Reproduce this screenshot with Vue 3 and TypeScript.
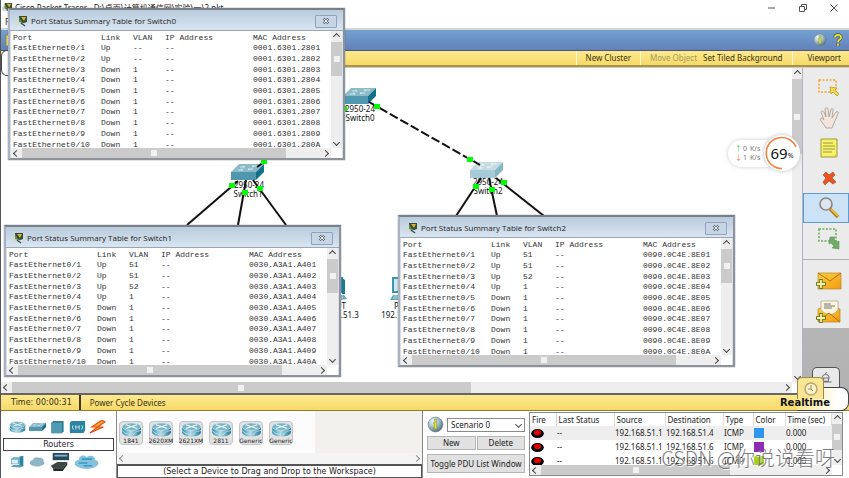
<script setup lang="ts">
import { ref } from 'vue'

interface PortRow { port: string; link: string; vlan: string; mac: string }
interface StatusWindow { id: string; title: string; rows: PortRow[] }
interface Pdu { source: string; destination: string; tone: string; id: number }

const suffixes = ['01', '02', '03', '04', '05', '06', '07', '08', '09', '0A']

function buildRows(prefix: string, vlans: string[], up: number): PortRow[] {
  return suffixes.map((s, i) => ({
    port: `FastEthernet0/${i + 1}`,
    link: i < up ? 'Up' : 'Down',
    vlan: vlans[i] ?? '1',
    mac: prefix + s,
  }))
}

const windows = ref<StatusWindow[]>([
  { id: 'w0', title: 'Port Status Summary Table for Switch0', rows: buildRows('0001.6301.28', ['--', '--'], 2) },
  { id: 'w1', title: 'Port Status Summary Table for Switch1', rows: buildRows('0030.A3A1.A4', ['51', '51', '52'], 4) },
  { id: 'w2', title: 'Port Status Summary Table for Switch2', rows: buildRows('0090.0C4E.8E', ['51', '51', '52'], 4) },
])

function closeWindow(id: string): void {
  windows.value = windows.value.filter((w) => w.id !== id)
}

const models: string[] = ['1841', '2620XM', '2621XM', '2811', 'Generic', 'Generic']
const scenario = ref('Scenario 0')

const pdus: Pdu[] = [
  { id: 1, source: '192.168.51.1', destination: '192.168.51.4', tone: 'blue' },
  { id: 2, source: '192.168.51.1', destination: '192.168.51.6', tone: 'purple' },
  { id: 3, source: '192.168.51.1', destination: '192.168.51.6', tone: 'lime' },
]

const links: string[] = [
  'M238 181 187 225', 'M246 180 238 225', 'M253 180 286 225',
  'M481 178 456 216', 'M489 178 497 216', 'M496 178 544 216',
  'M257 167 264 162',
]
const lights: [number, number][] = [
  [377, 107], [344, 109], [470, 160], [264, 162], [232, 186], [245, 193],
  [260, 189], [476, 187], [492, 190], [504, 183],
]
</script>

<template>
  <div class="app">
    <svg class="defs" aria-hidden="true">
      <defs>
        <linearGradient id="face" x1="0" y1="0" x2="1" y2="0">
          <stop offset="0" stop-color="#2f8fb0" /><stop offset=".45" stop-color="#b5dde8" /><stop offset="1" stop-color="#1f7898" />
        </linearGradient>
        <radialGradient id="orb" cx=".35" cy=".3" r=".8">
          <stop offset="0" stop-color="#f4fafd" /><stop offset=".5" stop-color="#9db9c6" /><stop offset="1" stop-color="#3f6278" />
        </radialGradient>
        <linearGradient id="mail" x1="0" y1="0" x2="1" y2="1">
          <stop offset="0" stop-color="#ffd23a" /><stop offset="1" stop-color="#f29a12" />
        </linearGradient>
        <symbol id="logo" viewBox="0 0 12 12">
          <ellipse cx="3" cy="7" rx="3" ry="3" fill="#d5d9d6" />
          <path d="M3 1h8v6l-3 1-5-1z" fill="#2e4f31" />
          <path d="M5 2l5 0-2 4z" fill="#e4a93a" />
          <path d="M3 2l3 5-3 0z" fill="#569338" />
          <path d="M5 8l4 3" stroke="#3b4a3b" stroke-width="1.4" />
        </symbol>
        <symbol id="switch" viewBox="0 0 33 16">
          <path d="M0 8 8 0h25l-8 8z" fill="#8dbac7" />
          <path d="M0 8h25v8H0z" fill="#4f97ae" />
          <path d="M25 8l8-8v8l-8 8z" fill="#11708a" />
          <path d="M9 3h5l-2-1M27 2h-6l2 1M7 6h5l-2-1M22 5h-5l2 1" fill="none" stroke="#dcedf2" stroke-width=".9" />
        </symbol>
        <symbol id="router" viewBox="0 0 22 16">
          <path d="M1 5v6c0 6 20 6 20 0V5z" fill="url(#face)" />
          <ellipse cx="11" cy="5" rx="10" ry="4" fill="#79b5c7" stroke="#e3f1f5" stroke-width=".6" />
          <path d="M5 3l12 4M17 3 5 7" stroke="#f3fafc" stroke-width="1.1" />
          <path d="M1 9c3 4 6 3 8 5M21 9c-3 1-7 1-8 5" stroke="#d9edf3" fill="none" stroke-width=".8" />
        </symbol>
        <symbol id="info" viewBox="0 0 16 16">
          <circle cx="8" cy="8" r="7" fill="url(#orb)" stroke="#6d8492" stroke-width=".6" />
          <path d="M6 6h3v5h1v1H6v-1h1V7H6zM7 3h2v2H7z" fill="#f2ef1c" stroke="#6e7320" stroke-width=".4" />
        </symbol>
        <symbol id="pc" viewBox="0 0 20 24">
          <path d="M3 1h12v14H3z" fill="#cfe6ee" stroke="#3f95ad" stroke-width="2" />
          <path d="M15 1l3 2v14h-3z" fill="#1b7793" />
          <path d="M0 23l3-5h14l3 4-6 1z" fill="#5fa8bd" />
          <path d="M4 19h12M3 21h13" stroke="#d5e9ef" stroke-width=".8" />
        </symbol>
      </defs>
    </svg>

    <header class="titlebar">
      <div class="caption">
        <svg class="logo"><use href="#logo" /></svg>
        <h1>Cisco Packet Tracer - D:\桌面\计算机通信网\实验\一\2.pkt</h1>
        <div class="controls">
          <button aria-label="Minimize"><svg viewBox="0 0 10 10"><path d="M1 5h7" /></svg></button>
          <button aria-label="Restore"><svg viewBox="0 0 10 10"><path d="M1.500 3.500h5v5h-5zM3.500 3V1.500h5v5H7" /></svg></button>
          <button aria-label="Close"><svg viewBox="0 0 10 10"><path d="M1.500 1.500l7 7M8.500 1.500l-7 7" /></svg></button>
        </div>
      </div>
      <nav class="menu"><a href="#file">File</a></nav>
    </header>

    <div class="toolbar">
      <button class="newfile" aria-label="New"><svg viewBox="0 0 8 14"><path d="M1 2h6v11H1z" fill="#f5e77a" stroke="#8c8442" /></svg></button>
      <button class="round" aria-label="Information"><svg><use href="#info" /></svg></button>
      <button class="round" aria-label="Help">
        <svg viewBox="0 0 12 16"><path d="M2.500 5c0-4 7-4 7 0 0 2.500-3.500 2.500-3.500 5.500M6 12v2.500" fill="none" stroke="#3c4d5c" stroke-width="3.400" /><path d="M2.500 5c0-4 7-4 7 0 0 2.500-3.500 2.500-3.500 5.500M6 12v2.500" fill="none" stroke="#eee625" stroke-width="2" /></svg>
      </button>
    </div>

    <div class="clusterbar">
      <button class="viewtab" aria-label="Logical view" />
      <button>New Cluster</button>
      <div class="pair"><button disabled>Move Object</button><button>Set Tiled Background</button></div>
      <button>Viewport</button>
    </div>

    <main class="workspace">
      <div class="stage">
        <div class="canvas">
          <svg class="diagram" viewBox="0 68 792 314">
            <use href="#switch" x="343" y="88" width="33" height="16" />
            <use href="#switch" x="231" y="164" width="33" height="16" />
            <use href="#switch" x="470" y="162" width="33" height="16" class="faded" />
            <use href="#pc" x="327" y="277" width="20" height="24" />
            <use href="#pc" x="390" y="277" width="20" height="24" />
            <g class="label">
              <text x="360" y="112">2950-24</text><text x="360" y="121">Switch0</text>
              <text x="249" y="188">2950-24</text><text x="248" y="197">Switch1</text>
              <text x="488" y="185">2950-24</text><text x="488" y="194">Switch2</text>
              <text x="335" y="309">PC-PT</text><text x="335" y="318">192.168.51.3</text>
              <text x="405" y="309">PC-PT</text><text x="405" y="318">192.168.51.4</text>
            </g>
            <path class="trunk" d="M369 102 480 165" />
            <path v-for="d in links" :key="d" class="link" :d="d" />
            <rect v-for="(p, i) in lights" :key="i" :x="p[0] - 3" :y="p[1] - 3" width="6" height="5" fill="#0f0" />
          </svg>
        </div>
        <div class="vbar main-v"><i class="arrow up" /><span class="thumb"><b /></span><span class="rest" /><i class="arrow down" /></div>
        <div class="hbar main-h"><i class="arrow left" /><span class="thumb"><b /></span><span class="rest" /><i class="arrow right" /></div>
      </div>

      <aside class="tools">
        <div class="group">
          <button aria-label="Select"><svg viewBox="0 0 24 24"><path d="M2 4h17v12H2z" fill="none" stroke="#f5a832" stroke-width="1.500" stroke-dasharray="2 1.500" /><path d="M13 11l7 1-2 2 4 4-2 2-4-4-2 2z" fill="#f5d93d" stroke="#9b8a31" stroke-width=".6" /></svg></button>
          <button aria-label="Move layout"><svg viewBox="0 0 24 24"><path d="M9 22c-2-4-5-6-6-9 1-2 3 0 4 1L4 6c1-2 2-1 3 0l2 5-1-8c1-2 3-1 3 0l1 8 2-8c1-1 3 0 2 1l-1 8 4-6c2-1 3 0 2 2l-4 9-2 5z" fill="#f3e4dc" stroke="#a69a94" stroke-width=".8" /></svg></button>
          <button aria-label="Place note"><svg viewBox="0 0 24 24"><path d="M4 3h16v18H4z" fill="#f8f26a" stroke="#a19a35" /><path d="M6 7h10M6 10h12M6 13h12M6 16h9" stroke="#9c9846" /><path d="M20 17l-4 4h4z" fill="#cfc94a" /></svg></button>
          <button aria-label="Delete"><svg viewBox="0 0 24 24"><path d="M6 9l3-3 3 3 4-3 2 3-3 3 4 4-3 2-4-3-4 4-2-3 3-4z" fill="#ea5420" stroke="#a85336" stroke-width=".7" /></svg></button>
          <button class="active" aria-label="Inspect"><svg viewBox="0 0 24 24"><circle cx="9" cy="8" r="6" fill="#dce8f0" stroke="#8d8581" stroke-width="1.600" /><path d="M13 13l8 8" stroke="#a17c27" stroke-width="3.200" /><path d="M14 13l7 7" stroke="#f2b92f" stroke-width="2" /></svg></button>
          <button aria-label="Resize shape"><svg viewBox="0 0 24 24"><path d="M2 3h17v12H2z" fill="none" stroke="#65ad58" stroke-width="1.500" stroke-dasharray="2 1.500" /><path d="M13 11h5l-1 2 3 3 2-1v8l-7-1 2-2-3-3-2 1z" fill="#6fac68" stroke="#638d60" stroke-width=".6" /></svg></button>
        </div>
        <div class="group mail">
          <button aria-label="Add simple PDU"><svg viewBox="0 0 26 24"><path d="M2 3h23v16H2z" fill="url(#mail)" stroke="#b4852a" stroke-width=".7" /><path d="M2 3l12 8 11-8" fill="none" stroke="#b26b12" /><path d="M5 9v10M0 14h10" stroke="#60732a" stroke-width="3.500" /><path d="M5 10v8M1 14h8" stroke="#eff5a2" stroke-width="1.800" /></svg></button>
          <button aria-label="Add complex PDU"><svg viewBox="0 0 26 24"><path d="M2 9l11-4 11 4v13H2z" fill="url(#mail)" stroke="#b4852a" stroke-width=".7" /><path d="M5 1h17v9c-5 6-11 6-17 0z" fill="#fdf5dd" stroke="#aaa28b" stroke-width=".7" /><path d="M8 4h7M8 6h11M8 8h8" stroke="#777" /><path d="M2 21l11-8 11 9" fill="none" stroke="#b26b12" /><path d="M5 13v10M0 18h10" stroke="#60732a" stroke-width="3.500" /><path d="M5 14v8M1 18h8" stroke="#eff5a2" stroke-width="1.800" /></svg></button>
        </div>
      </aside>
    </main>

    <div class="timebar">
      <span class="clock">Time: 00:00:31</span>
      <button>Power Cycle Devices</button>
      <div class="modes">
        <button class="sim" aria-label="Simulation"><svg viewBox="0 0 20 18"><path d="M3 14h14M5 10c0-7 9-7 9 0M7 9h6v4H7zM9 4l2-2" fill="none" stroke="#777" stroke-width="1.300" /></svg></button>
        <button class="real" aria-label="Realtime clock"><svg viewBox="0 0 16 16"><circle cx="8" cy="8" r="6" fill="#fbf1c4" stroke="#b5a878" stroke-width="1.500" /><path d="M8 4v4H5M8 8l2 2" fill="none" stroke="#9b9065" /></svg></button>
      </div>
      <strong>Realtime</strong>
    </div>

    <footer class="dock">
      <section class="categories">
        <div class="icons">
          <svg viewBox="0 0 22 16"><use href="#router" /></svg>
          <svg viewBox="0 0 33 16"><use href="#switch" /></svg>
          <svg viewBox="0 0 16 16"><path d="M1 3l2-2h12v12l-2 2H1z" fill="#2d7d98" /><path d="M1 3h12v12H1z" fill="#4f9bb3" /></svg>
          <svg viewBox="0 0 20 16"><path d="M1 3l2-2h16v11l-2 3H1z" fill="#2b84a1" /><path d="M5 6l-1 2 1 3M15 6l1 2-1 3M8 6v5M12 6v5M8 8h4" stroke="#dff1f6" fill="none" /></svg>
          <svg viewBox="0 0 20 16"><path d="M15 0 3 8l7 0-9 7 16-7-7 0 9-6z" fill="#f7a823" stroke="#e94a1d" stroke-width="1.300" /></svg>
        </div>
        <div class="current">Routers</div>
        <div class="icons">
          <svg viewBox="1 0 17 18"><path d="M1 5l3-2h8v9H1z" fill="#6cacc0" /><path d="M2 6h8v5H2z" fill="#d9edf3" /><path d="M12 2l5-1v13l-5 2z" fill="#2b84a1" /><path d="M1 15l3-2h10l-2 3z" fill="#58a1b8" /></svg>
          <svg viewBox="0 0 20 18"><path d="M3 13c-4-1-3-6 1-6 1-4 6-4 7-3 4-1 7 1 6 4 3 2 1 5-2 5-3 2-9 2-12 0z" fill="#8fb8c7" stroke="#6f98a8" stroke-width=".6" /></svg>
          <svg class="wide" viewBox="0 0 22 22"><path d="M3 1h18v8H3z" fill="#27475a" /><path d="M5 3h14v2H5z" fill="#7fb4c9" /><path d="M1 15l7-4h11l-5 7H3z" fill="#3f4745" /><path d="M3 18h11l5-7v3l-5 7H4z" fill="#222a2a" /></svg>
          <svg class="cloud" viewBox="0 0 26 18"><path d="M4 14c-5-1-4-7 1-7 0-5 6-6 8-3 5-3 9-1 9 3 5 1 4 6 0 7-3 3-14 3-18 0z" fill="#86c2dc" /><path d="M8 6h11M5 10h9M10 13h9" stroke="#3d99c5" stroke-width="1.600" /></svg>
        </div>
      </section>

      <section class="models">
        <div class="shelf">
          <button v-for="(m, i) in models" :key="i"><svg viewBox="0 0 22 16"><use href="#router" /></svg><span>{{ m }}</span></button>
        </div>
        <div class="hbar faint"><i class="arrow left" /><span class="rest" /><i class="arrow right" /></div>
        <p>(Select a Device to Drag and Drop to the Workspace)</p>
      </section>

      <section class="scenario">
        <div class="pick">
          <svg><use href="#info" /></svg>
          <label><select v-model="scenario" aria-label="Scenario"><option>Scenario 0</option></select></label>
        </div>
        <div class="two"><button>New</button><button>Delete</button></div>
        <button class="toggle">Toggle PDU List Window</button>
      </section>

      <section class="pdus">
        <div class="list">
          <table>
            <colgroup><col class="c1" /><col class="c2" /><col class="c3" /><col class="c4" /><col class="c5" /><col class="c6" /><col /></colgroup>
            <thead><tr><th>Fire</th><th>Last Status</th><th>Source</th><th>Destination</th><th>Type</th><th>Color</th><th>Time (sec)</th></tr></thead>
            <tbody>
              <tr v-for="p in pdus" :key="p.id">
                <td><svg class="fire" viewBox="0 0 14 10"><ellipse cx="7" cy="5" rx="7" ry="5" fill="#000" /><ellipse cx="7" cy="4" rx="4" ry="3" fill="#e60000" /></svg></td>
                <td>--</td><td>{{ p.source }}</td><td>{{ p.destination }}</td><td>ICMP</td>
                <td><span class="swatch" :class="p.tone" /></td><td>0.000</td>
              </tr>
            </tbody>
          </table>
        </div>
        <div class="vbar"><i class="arrow up" /><span class="thumb"><b /></span><span class="rest" /><i class="arrow down" /></div>
        <div class="hbar"><i class="arrow left" /><span class="thumb"><b /></span><span class="rest" /><i class="arrow right" /></div>
      </section>
    </footer>

    <section v-for="w in windows" :key="w.id" class="window" :class="w.id">
      <header>
        <svg><use href="#logo" /></svg>
        <h2>{{ w.title }}</h2>
        <button aria-label="Close" @click="closeWindow(w.id)"><svg viewBox="0 0 8 8"><path d="M1.500 1.500l5 5M6.500 1.500l-5 5" stroke="#5d6876" stroke-width="2.400" /><path d="M1.500 1.500l5 5M6.500 1.500l-5 5" stroke="#f3f7fb" stroke-width="1" /></svg></button>
      </header>
      <div class="body">
        <div class="pane">
          <table>
            <colgroup><col class="port" /><col class="lnk" /><col class="lnk" /><col class="port" /><col /></colgroup>
            <thead><tr><th>Port</th><th>Link</th><th>VLAN</th><th>IP Address</th><th>MAC Address</th></tr></thead>
            <tbody>
              <tr v-for="r in w.rows" :key="r.port"><td>{{ r.port }}</td><td>{{ r.link }}</td><td>{{ r.vlan }}</td><td>--</td><td>{{ r.mac }}</td></tr>
            </tbody>
          </table>
        </div>
        <div class="vbar"><i class="arrow up" /><span class="thumb"><b /></span><span class="rest" /><i class="arrow down" /></div>
        <div class="hbar"><i class="arrow left" /><span class="thumb"><b /></span><span class="rest" /><i class="arrow right" /></div>
      </div>
    </section>

    <div class="meter">
      <div class="rates">
        <span><i class="u">↑</i>0</span><span>K/s</span>
        <span><i class="d">↓</i>1</span><span>K/s</span>
      </div>
      <div class="dial">
        <svg viewBox="0 0 36 36"><circle cx="18" cy="18" r="17" fill="#fff" /><path d="M32 12A15.500 15.500 0 1 0 18 33.500" fill="none" stroke="#f58142" stroke-width="1.600" /></svg>
        <span>69<small>%</small></span>
      </div>
    </div>

    <div class="signature">CSDN @你说说看呀</div>
  </div>
</template>

<style>
body { margin: 0; }
</style>

<style scoped>
* { box-sizing: border-box; }
.app {
  position: relative; display: flex; flex-direction: column; height: 100vh; overflow: hidden;
  border-left: 1px solid #555; background: #fff; color: #222;
  font: 8px/10px "Noto Sans", "Noto Sans CJK SC", sans-serif;
}
.defs { position: absolute; width: 0; height: 0; }
button { margin: 0; padding: 0; border: 0; background: none; color: inherit; font: inherit; display: flex; align-items: center; justify-content: center; }
h1, h2, p { margin: 0; font-weight: 400; }
svg { display: block; }

.titlebar { flex: none; height: 28px; }
.caption { display: flex; align-items: center; height: 15px; gap: 2px; padding-left: 1px; }
.caption .logo { width: 11px; height: 11px; }
.caption h1 { flex: 1; font-size: 8px; line-height: 14px; white-space: nowrap; }
.controls { display: flex; gap: 21px; padding-right: 10px; }
.controls svg { width: 10px; height: 10px; fill: none; stroke: #555; stroke-width: 1; }
.menu { padding: 2px 4px; }
.menu a { color: #222; text-decoration: none; }

.toolbar {
  flex: none; display: flex; align-items: center; justify-content: flex-end; gap: 4px; height: 23px; padding: 0 4px;
  border-top: 2px solid #d5d5d5; border-bottom: 1px solid #49567a; background: linear-gradient(#73a0cf, #6381ba);
}
.newfile { margin-right: auto; }
.newfile svg { width: 8px; height: 14px; }
.round svg { width: 14px; height: 14px; }

.clusterbar {
  position: relative; z-index: 1; flex: none; display: flex; justify-content: flex-end; height: 16px;
  background: linear-gradient(#fde98f, #f6da68); border-bottom: 2px solid #ab9440;
}
.clusterbar > * { border-left: 1px solid #fff8d8; padding: 0 9px; height: 14px; }
.clusterbar .pair { display: flex; gap: 6px; }
.clusterbar > :last-child { padding-left: 15px; padding-right: 8px; }
.clusterbar button { color: #3a3212; }
.clusterbar button:disabled { color: #a89c62; }
.clusterbar .viewtab { position: absolute; left: 0; top: -1px; width: 40px; height: 26px; border: 1px solid #444; border-radius: 6px; background: #fff; }

.workspace { flex: 1; min-height: 0; display: flex; border-top: 1px solid #ccc; }
.stage { flex: 1; min-width: 0; display: grid; grid-template: 1fr 11px / 1fr 10px; }
.canvas { position: relative; overflow: hidden; background: #fff; }
.diagram { position: absolute; left: -1px; top: 0; width: 792px; height: 314px; }
.label text { text-anchor: middle; font-size: 8px; fill: #111; }
.faded { opacity: .5; }
.link { stroke: #111; stroke-width: 2; fill: none; }
.trunk { stroke: #111; stroke-width: 2; stroke-dasharray: 9 3; fill: none; }

.vbar, .hbar { display: flex; background: #eee; }
.vbar { flex-direction: column; grid-row: 1; grid-column: 2; }
.hbar { grid-row: 2; grid-column: 1; }
.thumb { display: flex; align-items: center; justify-content: center; background: #cbcbcb; }
.thumb b { width: 6px; height: 6px; background: #f1f1f1; }
.rest { flex: 1; }
.arrow { flex: none; display: flex; align-items: center; justify-content: center; width: 11px; height: 11px; }
.arrow::before { content: ""; width: 4px; height: 4px; border: solid #444; border-width: 1px 0 0 1px; }
.up::before { transform: rotate(45deg); }
.right::before { transform: rotate(135deg); }
.down::before { transform: rotate(225deg); }
.left::before { transform: rotate(-45deg); }
.main-v .thumb { height: 24%; }
.main-h .thumb { width: 58%; }

.tools { flex: none; width: 47px; background: linear-gradient(#c4c4c4, #b2b2b2); border-left: 1px solid #aeb4bd; }
.group { display: flex; flex-direction: column; align-items: stretch; background: #ebebeb; padding-top: 5px; height: 192px; border-bottom: 1px solid #b2b2b2; }
.group button { height: 30px; padding-left: 6px; }
.group svg { width: 24px; height: 24px; }
.group .active { background: #cce3f7; border: 1px solid #5d9bd0; }
.group.mail { height: 68px; border: 0; padding-top: 7px; }
.mail svg { width: 26px; }

.timebar {
  position: relative; flex: none; display: flex; align-items: stretch; height: 18px;
  border-top: 2px solid #666; border-bottom: 1px solid #8f7b31; background: linear-gradient(#fde98f, #f6da68); color: #3a3212;
}
.clock { padding: 3px 7px 0 10px; font-family: "DejaVu Sans", sans-serif; border-right: 2px solid #3f3716; }
.timebar > button { padding: 0 9px; }
.modes { position: absolute; right: 0; bottom: -1px; width: 52px; height: 24px; background: linear-gradient(90deg, #fae693, #fff 80%); border: solid #444; border-width: 1px 1px 1px 0; border-radius: 0 8px 8px 0; }
.timebar strong { position: relative; margin-left: auto; padding-right: 19px; font: bold 10px/15px "DejaVu Sans", sans-serif; color: #111; }
.sim, .real { position: absolute; border-radius: 5px 5px 0 0; border: 1px solid #555; border-bottom: 0; }
.sim { left: 15px; top: -21px; width: 28px; height: 20px; background: #e9e9e9; }
.real { left: 0; top: -11px; width: 27px; height: 22px; background: #fae593; border-color: #99884a; }
.sim svg, .real svg { width: 16px; height: 16px; }

.dock { flex: none; display: flex; height: 67px; }
.categories { width: 116px; padding: 6px 2px 0; border-right: 1px solid #888; display: flex; flex-direction: column; gap: 1px; }
.icons { display: flex; align-items: center; height: 20px; gap: 3px; padding-left: 6px; }
.icons svg { flex: none; width: 17px; height: 14px; }
.icons .wide { width: 22px; height: 20px; }
.icons .cloud { width: 25px; height: 18px; }
.current { height: 13px; border: 1px solid #444; text-align: center; font: 8px/11px "DejaVu Sans", sans-serif; }

.models { flex: 1; min-width: 0; border-right: 1px solid #888; display: flex; flex-direction: column; }
.shelf { flex: 1; display: flex; align-items: center; gap: 6px; padding: 2px 2px 0; background: linear-gradient(90deg, #fcfcfc 65%, #f3f1ee 65%); }
.shelf button { flex-direction: column; width: 24px; height: 24px; border: 1px solid #c4c4c4; border-radius: 4px; background: #e2e2e2; }
.shelf svg { width: 21px; height: 15px; }
.shelf span { font: 6px/7px "DejaVu Sans", sans-serif; white-space: nowrap; }
.faint { height: 11px; opacity: .6; }
.models p { height: 14px; border: 1px solid #555; border-top-width: 2px; text-align: center; font: 8px/11px "DejaVu Sans", sans-serif; white-space: nowrap; }

.scenario { flex: none; width: 106px; padding: 5px 4px; display: flex; flex-direction: column; }
.pick { display: flex; align-items: center; gap: 3px; }
.pick svg { flex: none; width: 17px; height: 17px; }
.pick label { position: relative; flex: 1; min-width: 0; display: flex; }
.pick label::after { content: ""; position: absolute; right: 4px; top: 4px; width: 4px; height: 4px; border: solid #555; border-width: 0 1px 1px 0; transform: rotate(45deg); pointer-events: none; }
.pick select { appearance: none; flex: 1; min-width: 0; height: 14px; padding: 0 0 0 3px; border: 1px solid #8b8b8b; border-radius: 0; background: #fff; color: #222; font: 8px/10px "Noto Sans", sans-serif; }
.two { display: flex; gap: 1px; margin: 3px 0 4px; }
.two button, .toggle { flex: 1; background: #e1e1e1; border: 1px solid #b5b5b5; height: 14px; white-space: nowrap; }
.toggle { flex: none; height: 19px; }

.pdus { flex: none; width: 314px; height: 64px; margin: 1px 6px 0 0; border: 1px solid #8a8a8a; display: grid; grid-template: minmax(0, 1fr) 10px / minmax(0, 1fr) 10px; }
.list { overflow: hidden; }
.pdus table { width: 100%; table-layout: fixed; border-collapse: collapse; }
.pdus th { height: 13px; padding: 0 0 0 2px; text-align: left; font-weight: 400; border-right: 1px solid #ddd; white-space: nowrap; }
.pdus td { height: 14px; padding: 0 0 0 1px; white-space: nowrap; }
.pdus tbody tr:first-child { background: #eee; }
.c1 { width: 26px; } .c2 { width: 58px; } .c3 { width: 51px; } .c4 { width: 58px; } .c5 { width: 30px; } .c6 { width: 32px; }
.fire { width: 13px; height: 9px; }
.swatch { display: block; width: 10px; height: 10px; }
.blue { background: #2e96ee; } .purple { background: #8f2cb6; } .lime { background: #a4cf22; }
.pdus .vbar .thumb { height: 26px; }
.pdus .hbar .thumb { width: 189px; }
.pdus .vbar .arrow { width: 10px; }

.window { position: absolute; z-index: 2; width: 337px; height: 152px; border: 2px solid #8e939b; border-top-color: #787f89; border-left-color: #a9b2be; background: #d5e0ec; display: flex; flex-direction: column; box-shadow: 0 0 1px #666; }
.w0 { left: 7px; top: 8px; }
.w1 { left: 3px; top: 225px; }
.w2 { left: 397px; top: 215px; }
.window header { flex: none; height: 21px; display: flex; align-items: center; gap: 3px; padding: 2px 6px 0; background: linear-gradient(#b9cbdc, #d9e5f1); border-bottom: 1px solid #9da6b0; }
.window header svg { width: 12px; height: 12px; }
.window h2 { flex: 1; font: 8px/12px "Open Sans", sans-serif; white-space: nowrap; }
.window header button { width: 22px; height: 13px; border: 1px solid #93a4ba; border-radius: 1px; background: #c7d6e6; }
.window header button svg { width: 8px; height: 8px; }
.body { flex: 1; min-height: 0; margin: 0 1px; display: grid; grid-template: minmax(0, 1fr) 10px / minmax(0, 1fr) 11px; background: #fff; }
.pane { overflow: hidden; padding: 2px 0 0 2px; }
.pane table { width: 100%; height: 117px; table-layout: fixed; border-spacing: 0; font: 8px/10px "Liberation Mono", monospace; color: #333; }
.pane th, .pane td { padding: 0; text-align: left; font-weight: 400; white-space: nowrap; }
.port { width: 88px; } .lnk { width: 32px; }
.window .vbar .thumb { height: 34px; }
.window .hbar .thumb { width: 264px; }

.meter { position: absolute; left: 727px; top: 135px; display: flex; align-items: center; }
.rates { display: grid; grid-template-columns: 15px 14px; align-content: center; width: 46px; height: 27px; padding-left: 7px; border-radius: 14px 0 0 14px; background: #fff; box-shadow: 0 0 4px #ccc; font-size: 7px; line-height: 9px; color: #777; }
.rates i { font-style: normal; margin-right: 1px; }
.u { color: #2fb457; } .d { color: #f5803f; }
.dial { position: relative; width: 36px; height: 36px; margin-left: -10px; border-radius: 50%; box-shadow: 0 0 4px #bbb; background: #fff; }
.dial span { position: absolute; inset: 0; display: flex; align-items: center; justify-content: center; font-size: 15px; color: #111; }
.dial small { font-size: 7px; padding-top: 5px; }

.signature { position: absolute; right: 14px; bottom: 8px; font: 300 20px/24px "Noto Sans CJK SC", sans-serif; color: #555; opacity: .75; text-shadow: 1px 1px #fff; white-space: nowrap; }
</style>
